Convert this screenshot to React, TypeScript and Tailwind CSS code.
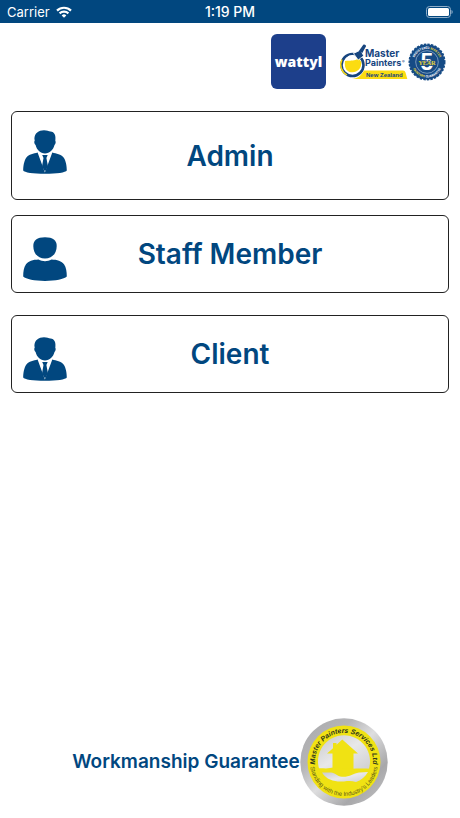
import clsx from "clsx"

function WifiIcon() {
    return (
        <svg viewBox="0 0 16 12" className="h-3 w-4" fill="none" stroke="white" strokeWidth="2.2" aria-hidden="true">
            <path d="M1 4.6a10 10 0 0 1 14 0" />
            <path d="M3.6 7.4a6.3 6.3 0 0 1 8.8 0" />
            <path d="M8 11.8 5.7 9.4a3.3 3.3 0 0 1 4.6 0z" fill="white" stroke="none" />
        </svg>
    )
}

function BatteryIcon() {
    return (
        <svg viewBox="0 0 27 12" className="h-3 w-[27px]" aria-hidden="true">
            <rect x="0.5" y="0.5" width="24" height="11" rx="3" fill="none" stroke="#8fadc8" />
            <rect x="2" y="2" width="21" height="8" rx="1.6" fill="white" />
            <path d="M25.5 4v4c1.6-.7 1.6-3.3 0-4z" fill="#8fadc8" />
        </svg>
    )
}

function SuitIcon({ className }: { className?: string }) {
    return (
        <svg viewBox="0 0 44 44" className={clsx("size-11", className)} fill="#01477f" aria-hidden="true">
            <path d="M11.4 8.5C11.6 3.2 15.6.3 21 .2c3 0 4.6.8 6.5 1.4 4 .5 5.6 3.6 4.8 9.3.7.3.5 3-.8 4.2C30.2 20 26.7 23.5 22 23.5S13.8 20 12.6 15.1c-1.4-1-1.7-3.9-.9-4.3z" />
            <path d="M14.6 22.5 21.9 42.4 29.3 22.5c4 1.3 8.8 1.5 11.5 5.2 2.2 3.1 3 8.9 3 12.8-1 2-10 3.3-21.8 3.3S1.2 42.5.2 40.5c0-3.9.8-9.7 3-12.8 2.7-3.7 7.4-3.9 11.4-5.2z" />
            <path d="M19.2 25h5.5l-1.3 3 1.6 8.500-3 5-3-5L20.500 28z" />
        </svg>
    )
}

function PersonIcon({ className }: { className?: string }) {
    return (
        <svg viewBox="0 0 44 44" className={clsx("size-11", className)} fill="#01477f" aria-hidden="true">
            <path d="M22 .3c8 0 11.7 3 11.7 8.6C33.7 16 29.5 21.5 22 21.5S10.3 16 10.3 8.9C10.3 3.3 14 .3 22 .3z" />
            <path d="M15.5 22.5c4 2.2 9 2.2 13 0 5.5.2 10.3 1.5 12.5 4.8 2.2 3.2 2.8 7.500 2.8 12.2C41 42.3 32.5 43.9 22 43.9S3 42.3.2 39.500C.2 34.8.8 30.5 3 27.3c2.2-3.3 7-4.6 12.5-4.8z" />
        </svg>
    )
}

function WattylLogo() {
    return (
        <div className="flex size-[55px] items-center justify-center rounded-md bg-[#1d3f8b]">
            <span className="font-['Open_Sans',sans-serif] text-sm font-extrabold text-white">wattyl</span>
        </div>
    )
}

function MasterPaintersLogo() {
    return (
        <svg viewBox="0 0 69 38" className="h-[38px] w-[69px]" role="img" aria-label="Master Painters New Zealand">
            <circle cx="13.5" cy="22" r="11" fill="none" stroke="#17457f" strokeWidth="2.6" />
            <path d="M3 16.500a11.500 11.500 0 0 0 5 15.500" fill="none" stroke="#fbdc12" strokeWidth="1.4" />
            <circle cx="13.5" cy="20.5" r="8.4" fill="white" />
            <path d="M6 18c3-1 10 1 13.5-3l2.7 4c.6 6-3.6 10.3-8.7 10.3S5 26 6 18z" fill="#fbdc12" />
            <path d="M12 36c6 .3 10.5-3.5 13-8.5h39q2 0 2.5 2l1.8 6.5z" fill="#fbdc12" />
            <path d="m14.5 10.5 7-3.5 3.2 5.8-5.5 4.2z" fill="#17457f" stroke="white" strokeWidth=".8" />
            <path d="m20 7.8 4.3-6c1-1 3.3.3 2.6 1.7l-3.6 6.5z" fill="#17457f" />
            <g fill="#17457f" className="font-['Inter',sans-serif] font-bold">
                <text x="26" y="14" fontSize="10">Master</text>
                <text x="26" y="23" fontSize="9">Painters</text>
                <text x="63" y="20" fontSize="4">®</text>
            </g>
            <text x="27" y="34" fontSize="6" fill="#17457f" className="font-['Liberation_Sans',sans-serif] font-bold">New Zealand</text>
        </svg>
    )
}

function FiveYearBadge() {
    return (
        <svg viewBox="0 0 38 38" className="size-[38px]" role="img" aria-label="5 year registered master painters guarantee">
            <defs>
                <path id="five-top" d="M5.8 19a13.2 13.2 0 0 1 26.4 0" />
                <path id="five-bottom" d="M3.5 19a15.5 15.5 0 0 0 31 0" />
            </defs>
            <circle cx="19" cy="19" r="17.6" fill="#164b85" stroke="#164b85" strokeWidth="1.8" strokeDasharray="2.4 1.2" />
            <circle cx="19" cy="19" r="11.3" fill="none" stroke="#9db8d2" strokeWidth=".7" />
            <g className="font-['Inter',sans-serif] font-bold" fontSize="3" textAnchor="middle">
                <text fill="white">
                    <textPath href="#five-top" startOffset="50%">REGISTERED <tspan fill="#e9d83a">MASTER</tspan></textPath>
                </text>
                <text fill="#e9d83a">
                    <textPath href="#five-bottom" startOffset="50%">PAINTERS <tspan fill="white">GUARANTEE</tspan></textPath>
                </text>
            </g>
            <text x="19" y="27" fontSize="23" fill="white" textAnchor="middle" className="font-['Liberation_Sans',sans-serif] font-bold">5</text>
            <text
                x="19"
                y="22"
                fontSize="6"
                fill="#e9d83a"
                stroke="#164b85"
                strokeWidth="1.5"
                paintOrder="stroke"
                textAnchor="middle"
                className="font-['Liberation_Serif',serif] font-bold"
            >
                YEAR
            </text>
        </svg>
    )
}

function ServicesBadge() {
    return (
        <svg viewBox="0 0 88 88" className="size-[88px]" role="img" aria-label="Master Painters Services Ltd">
            <defs>
                <linearGradient id="silver" x1="0" y1="0" x2="1" y2="1">
                    <stop offset="0" stopColor="#a9a9ab" />
                    <stop offset=".3" stopColor="#b5b5b7" />
                    <stop offset=".5" stopColor="#dededf" />
                    <stop offset=".75" stopColor="#a8a8aa" />
                    <stop offset="1" stopColor="#c6c6c8" />
                </linearGradient>
                <linearGradient id="silver-inner" x1="0" y1="0" x2="1" y2="1">
                    <stop offset="0" stopColor="#c9c9cb" />
                    <stop offset=".5" stopColor="#e8e8e9" />
                    <stop offset="1" stopColor="#cfcfd1" />
                </linearGradient>
                <path id="badge-top" d="M15.3 48a29 29 0 1 1 57.4 0" />
                <path id="badge-bottom" d="M10 44a34 34 0 0 0 68 0" />
            </defs>
            <circle cx="44" cy="44" r="43.7" fill="url(#silver)" />
            <circle cx="44" cy="44" r="36.5" fill="#f0e213" />
            <path d="M19.5 52a26 26 0 1 1 49 0z" fill="url(#silver-inner)" />
            <path d="M42.3 21.5 58 35.5h-4.5V51h-21V35.5H27l6-5.3V25h3.5v1.8z" fill="#f0e213" />
            <path d="M22 54.5h9c4 0 6 4 11 4.3 8 .3 11-3.3 17-4.3l9-.5c-3 5-7 8.5-12 10-4-1.3-7-1.3-12-.6-9 .6-17-1-22-8.9z" fill="url(#silver-inner)" />
            <path d="M17 50.5c5-.5 9 .4 13-.4 5-.8 10-.6 14 .4 7 .8 15-.4 26 .3v2.5c-10 .3-15 .5-18 .3-4 .6-5 2.4-9 2.2l-5-.7c3-.2 5-.5 5.5-1.8-4-1.3-7-1.4-10-.8-5 .6-10 .4-16.5.5z" fill="#f0e213" />
            <text fontSize="7" fill="#2b331c" textAnchor="middle" className="font-['Liberation_Sans',sans-serif] font-bold italic">
                <textPath href="#badge-top" startOffset="50%">Master Painters Services Ltd</textPath>
            </text>
            <text fontSize="6" fill="#5c5a18" textAnchor="middle" className="font-['Liberation_Sans',sans-serif]">
                <textPath href="#badge-bottom" startOffset="50%">Standing with the Industry's Leaders</textPath>
            </text>
        </svg>
    )
}

const cardClass =
    "grid w-full cursor-pointer grid-cols-[44px_1fr_44px] items-center rounded-md border border-[#222] bg-white px-[11px] text-center text-[28px] leading-9 font-semibold text-[#01477f]"

export default function App() {
    return (
        <div className="flex min-h-screen flex-col bg-white font-['Inter',sans-serif]">
            <div className="grid h-[23px] grid-cols-3 items-center bg-[#01477f] px-[7px] text-[13px] leading-4 text-white">
                <div className="flex items-center gap-1.5">
                    <span>Carrier</span>
                    <WifiIcon />
                </div>
                <span className="text-center text-sm leading-4 font-medium">1:19 PM</span>
                <div className="flex justify-end">
                    <BatteryIcon />
                </div>
            </div>

            <header className="flex items-center justify-end px-3.5 pt-[11px]">
                <WattylLogo />
                <div className="ml-[13px] flex items-center">
                    <MasterPaintersLogo />
                    <FiveYearBadge />
                </div>
            </header>

            <main className="flex flex-col px-[11px] pt-[22px]">
                <button type="button" className={clsx(cardClass, "h-[89px]")}>
                    <SuitIcon className="mb-2" />
                    <span>Admin</span>
                </button>
                <button type="button" className={clsx(cardClass, "mt-[15px] h-[78px]")}>
                    <PersonIcon className="mt-2.5" />
                    <span>Staff Member</span>
                </button>
                <button type="button" className={clsx(cardClass, "mt-[22px] h-[78px]")}>
                    <SuitIcon className="mt-2.5" />
                    <span>Client</span>
                </button>
            </main>

            <footer className="mt-auto flex items-center justify-center pb-3">
                <p className="text-[19px] leading-7 font-semibold text-[#01477f]">Workmanship Guarantee</p>
                <ServicesBadge />
            </footer>
        </div>
    )
}
